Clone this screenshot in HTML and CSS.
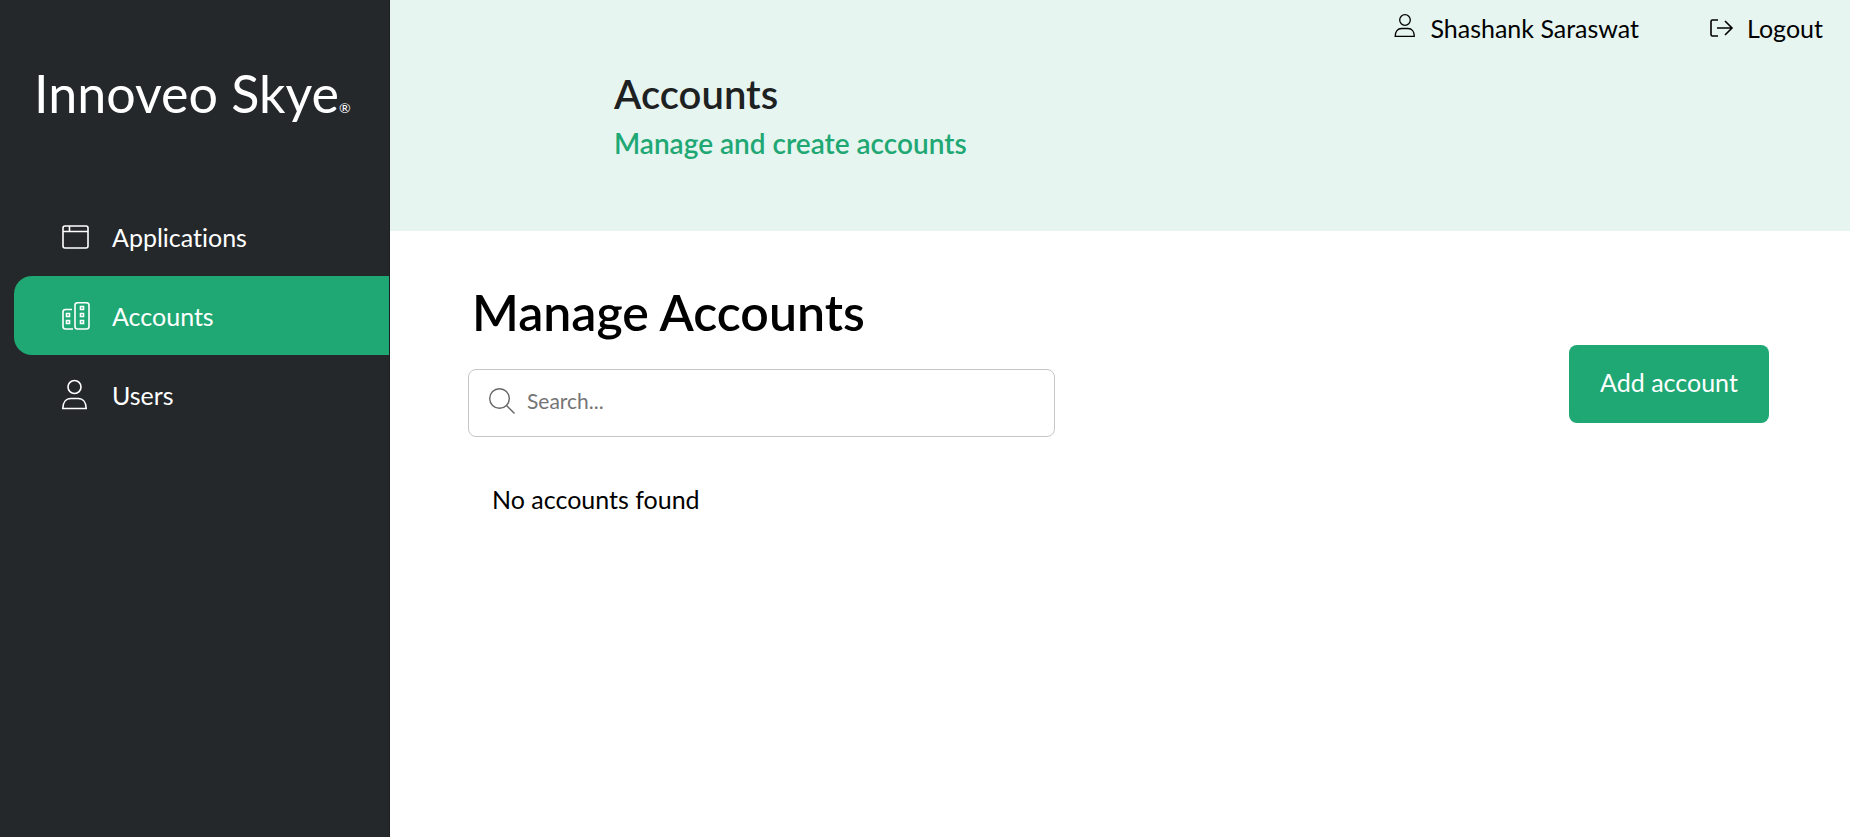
FILE: index.html
```html
<!DOCTYPE html>
<html lang="en">
<head>
<meta charset="utf-8">
<meta name="viewport" content="width=device-width, initial-scale=1">
<title>Accounts - Innoveo Skye</title>
<link rel="stylesheet" href="styles.css">
</head>
<body>
<div class="app">
  <aside class="sidebar">
    <div class="brand">Innoveo Skye<span class="brand-mark">®</span></div>
    <nav class="nav">
      <a class="nav-item" href="#applications">
        <svg class="nav-icon" viewBox="0 0 28 28" aria-hidden="true"><rect x="1" y="3" width="25" height="22" rx="2"/><path d="M1 8.500h25M7.500 3v5"/></svg>
        Applications
      </a>
      <a class="nav-item active" href="#accounts" aria-current="page">
        <svg class="nav-icon" viewBox="0 0 28 28" aria-hidden="true"><path d="M10 7.500H3.500Q1 7.500 1 10V24.500Q1 27 3.500 27H11"/><rect x="13" y="0.700" width="14" height="26.300" rx="2.500"/><path d="M4.500 11.500h3v3h-3zM4.500 18.500h3v3h-3zM18.500 4.500h3v3h-3zM18.500 11.500h3v3h-3zM18.500 18.500h3v3h-3z"/></svg>
        Accounts
      </a>
      <a class="nav-item" href="#users">
        <svg class="nav-icon" viewBox="0 0 28 28" aria-hidden="true"><circle cx="12.500" cy="6" r="6.500"/><path d="M.8 27.500c0-6 3.200-10 8.200-10h7c5 0 8.200 4 8.200 10z"/></svg>
        Users
      </a>
    </nav>
  </aside>
  <div class="page">
    <header class="header">
      <div class="userbar">
        <a class="user-link" href="#profile">
          <svg class="user-icon" viewBox="0 0 22 28" aria-hidden="true"><circle cx="11" cy="6" r="5.300"/><path d="M1.200 22.300c0-4.600 2.400-7.800 6.300-7.800h6.500c3.900 0 6.300 3.200 6.300 7.800z"/></svg>
          Shashank Saraswat
        </a>
        <a class="user-link" href="#logout">
          <svg class="logout-icon" viewBox="0 0 24 18" aria-hidden="true"><path d="M9 1H3.500Q2 1 2 2.500v13Q2 17 3.500 17H9M8 9h15M16 2l7 7-7 7"/></svg>
          Logout
        </a>
      </div>
      <div class="heading">
        <h1 class="title">Accounts</h1>
        <p class="subtitle">Manage and create accounts</p>
      </div>
    </header>
    <main class="content">
      <div class="toolbar">
        <div class="finder">
          <h2 class="section-title">Manage Accounts</h2>
          <label class="search">
            <svg class="search-icon" viewBox="0 0 26 26" aria-hidden="true"><circle cx="10.500" cy="10.500" r="9.800"/><path d="M17.500 17.500l8 8"/></svg>
            <input class="search-input" type="text" placeholder="Search..." aria-label="Search accounts">
          </label>
        </div>
        <button class="add-button" type="button">Add account</button>
      </div>
      <p class="empty">No accounts found</p>
    </main>
  </div>
</div>
</body>
</html>
```
FILE: styles.css
```css
* { box-sizing: border-box; }

body {
  margin: 0;
  background: #fff;
  color: #000;
  font-family: Lato, "Liberation Sans", sans-serif;
  font-size: 25px;
  line-height: 32px;
  font-variant-ligatures: none;
}

h1, h2, p { margin: 0; }
a { color: inherit; text-decoration: none; }
svg { flex: none; fill: none; stroke: currentColor; overflow: visible; }

.app { display: flex; min-height: 100vh; }

.sidebar {
  flex: none;
  width: 390px;
  padding: 63px 0 0 14px;
  border-right: 1px solid #1d1f21;
  background: #24282b;
  color: #fff;
}

.brand {
  padding-left: 20px;
  font-size: 52px;
  line-height: 60px;
  white-space: nowrap;
}
.brand-mark { font-size: 14px; line-height: 14px; }

.nav { display: flex; flex-direction: column; margin-top: 74px; }
.nav-item {
  display: flex;
  align-items: center;
  gap: 22px;
  height: 79px;
  padding-left: 48px;
  border-radius: 18px 0 0 18px;
}
.nav-item.active { background: #1fa874; }
.nav-icon { width: 28px; height: 28px; stroke-width: 1.600; }

.page { flex: 1; min-width: 0; }

.header {
  min-height: 231px;
  padding: 12px 27px 0 224px;
  background: #e6f5f0;
}
.userbar { display: flex; justify-content: flex-end; gap: 70px; }
.user-link { display: flex; align-items: center; gap: 14px; }
.user-icon { width: 22px; height: 28px; stroke-width: 1.300; }
.logout-icon { width: 24px; height: 18px; stroke-width: 1.600; }

.heading { padding-top: 26px; }
.title { color: #1e2122; font-size: 40px; line-height: 48px; font-weight: 600; }
.subtitle { margin-top: 9px; color: #1fa874; font-size: 28px; font-weight: 600; }

.content { padding: 51px 81px 0 78px; }
.toolbar { display: flex; align-items: flex-start; justify-content: space-between; gap: 24px; }
.finder { flex: 0 1 587px; }
.section-title { padding-left: 4px; font-size: 50px; line-height: 60px; font-weight: 600; }

.search {
  display: flex;
  align-items: center;
  gap: 12px;
  height: 68px;
  margin-top: 27px;
  padding: 0 20px 4px;
  border: 1px solid #c6c6c6;
  border-radius: 8px;
  color: #666;
}
.search-icon { width: 26px; height: 26px; stroke-width: 1.400; }
.search-input {
  flex: 1;
  min-width: 0;
  padding: 0;
  border: 0;
  outline: 0;
  background: none;
  font: inherit;
  font-size: 21px;
}
.search-input::placeholder { color: #757575; opacity: 1; }

.add-button {
  width: 200px;
  height: 78px;
  margin-top: 63px;
  padding: 0 0 4px;
  border: 0;
  border-radius: 8px;
  background: #1fa874;
  color: #fff;
  font: inherit;
}

.empty { margin-top: 46px; padding-left: 24px; }
```
